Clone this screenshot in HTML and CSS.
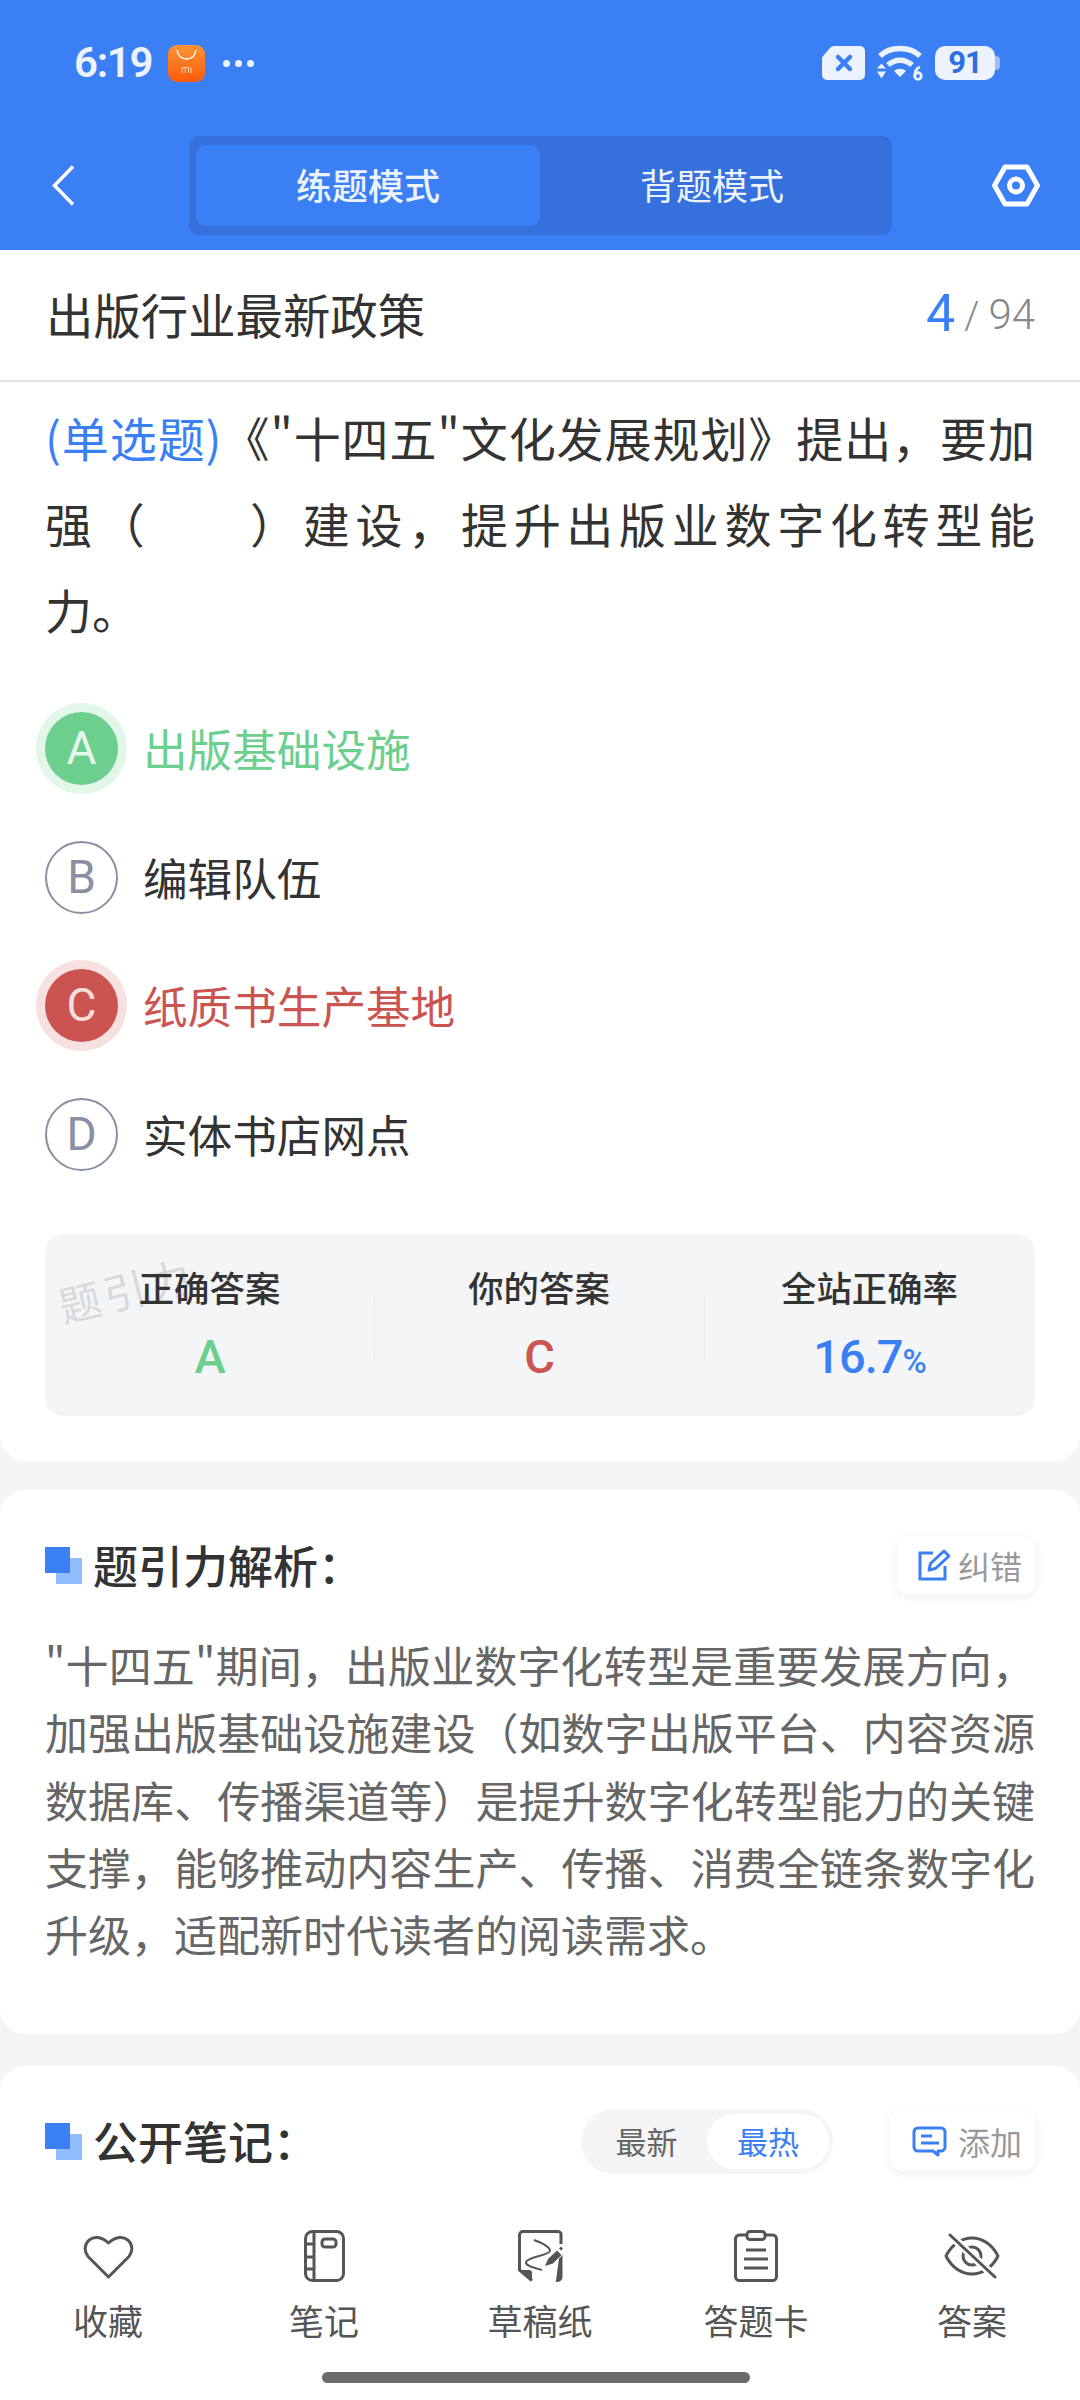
FILE: index.html
```html
<!DOCTYPE html>
<html lang="zh-CN">
<head>
<meta charset="utf-8">
<title>练题模式</title>
<link rel="stylesheet" href="styles.css">
</head>
<body>
<div class="phone">
  <header class="top">
    <div class="status">
      <div class="status-left">
        <span class="time">6:19</span>
        <svg class="mi" viewBox="0 0 37 37" width="37" height="37"><defs><linearGradient id="mig" x1="0" y1="0" x2="0" y2="1"><stop offset="0" stop-color="#fb9434"/><stop offset="1" stop-color="#fc5a0c"/></linearGradient></defs><rect width="37" height="37" rx="9" fill="url(#mig)"/><path d="M9 5c1 6 5 9 9.500 9S27 11 28 5" fill="none" stroke="#fff" stroke-width="1.500"/><path d="M14 28v-5.500h6.500V28M17.200 22.500V28M23 22.500V28" fill="none" stroke="#ffd9b8" stroke-width="1"/></svg>
        <span class="dots"><i></i><i></i><i></i></span>
      </div>
      <div class="status-right">
        <svg width="43" height="34" viewBox="0 0 43 34"><path d="M11 0h27a5 5 0 0 1 5 5v24a5 5 0 0 1-5 5H5a5 5 0 0 1-5-5V13a5 5 0 0 1 1.500-3.500L7.500 2.500A6 6 0 0 1 11 0z" fill="#edf3fe"/><path d="M16 11l12 12M28 11L16 23" stroke="#3b7ff5" stroke-width="4.500" stroke-linecap="round"/></svg>
        <svg class="wifi" width="46" height="36" viewBox="0 0 46 36"><path d="M3 11C13 1 33 1 43 11" fill="none" stroke="#edf3fe" stroke-width="5.500"/><path d="M11 20c7-6.500 17-6.500 24 0" fill="none" stroke="#edf3fe" stroke-width="5.500"/><path d="M17 26c3.500-3 8.500-3 12 0l-6 6z" fill="#edf3fe"/><path d="M0 23.500l4.500-5 4.500 5zM0 26.500l4.500 7 4.500-7z" fill="#edf3fe"/><circle cx="41" cy="31" r="3.300" fill="none" stroke="#edf3fe" stroke-width="2.800"/><path d="M37.800 31c0-5 2.500-8 5-9" fill="none" stroke="#edf3fe" stroke-width="2.800"/></svg>
        <span class="battery"><b>91</b></span>
      </div>
    </div>
    <nav class="nav">
      <svg class="back" width="22" height="41" viewBox="0 0 22 41"><path d="M21 1.500L2.500 20.500 21 39.500" fill="none" stroke="#fff" stroke-width="3.500"/></svg>
      <div class="tabs">
        <span class="tab active">练题模式</span>
        <span class="tab">背题模式</span>
      </div>
      <svg class="gear" width="48" height="43" viewBox="0 0 48 43"><path d="M13 3h22l10.500 18.500L35 40H13L2.500 21.500z" fill="none" stroke="#fff" stroke-width="5" stroke-linejoin="round"/><circle cx="24" cy="21.500" r="6.500" fill="none" stroke="#fff" stroke-width="5"/></svg>
    </nav>
  </header>

  <section class="card first">
    <div class="subject">
      <span class="subject-name">出版行业最新政策</span>
      <span class="count"><em>4</em><s>/</s>94</span>
    </div>
    <div class="question-body">
      <p class="question">
        <span class="qline"><span class="qtype">(单选题)</span>《"十四五"文化发展规划》提出，要加</span>
        <span class="qline">强（&emsp;&emsp;）建设，提升出版业数字化转型能</span>
        <span class="qline last">力。</span>
      </p>
      <ul class="options">
        <li class="option right"><span class="letter">A</span><span>出版基础设施</span></li>
        <li class="option"><span class="letter">B</span><span>编辑队伍</span></li>
        <li class="option wrong"><span class="letter">C</span><span>纸质书生产基地</span></li>
        <li class="option"><span class="letter">D</span><span>实体书店网点</span></li>
      </ul>
      <div class="stats">
        <span class="watermark">题引力</span>
        <div class="stat"><span class="stat-label">正确答案</span><span class="stat-value green">A</span></div>
        <div class="stat"><span class="stat-label">你的答案</span><span class="stat-value red">C</span></div>
        <div class="stat"><span class="stat-label">全站正确率</span><span class="stat-value blue">16.7<small>%</small></span></div>
      </div>
    </div>
  </section>

  <section class="card analysis">
    <div class="card-head">
      <h2 class="heading"><span class="mark"></span>题引力解析：</h2>
      <button class="chip fix"><svg width="32" height="32" viewBox="0 0 32 32"><path d="M15 4H2v26h25V17" fill="none" stroke="#3b7ff5" stroke-width="3"/><path d="M11 21l1.500-6.500L26 2l5 5-13.500 12.500z" fill="none" stroke="#3b7ff5" stroke-width="3" stroke-linejoin="round"/></svg><span>纠错</span></button>
    </div>
    <p class="analysis-text">"十四五"期间，出版业数字化转型是重要发展方向，加强出版基础设施建设（如数字出版平台、内容资源数据库、传播渠道等）是提升数字化转型能力的关键支撑，能够推动内容生产、传播、消费全链条数字化升级，适配新时代读者的阅读需求。</p>
  </section>

  <section class="card notes">
    <div class="card-head">
      <h2 class="heading"><span class="mark"></span>公开笔记：</h2>
      <div class="notes-tools">
        <div class="sort"><span>最新</span><span class="on">最热</span></div>
        <button class="chip add"><svg width="35" height="31" viewBox="0 0 35 31"><path d="M6 2h23a4 4 0 0 1 4 4v15a4 4 0 0 1-4 4h-3v4l-5-4H6a4 4 0 0 1-4-4V6a4 4 0 0 1 4-4z" fill="none" stroke="#3b7ff5" stroke-width="3" stroke-linejoin="round"/><path d="M9 10h11M9 17h18" stroke="#3b7ff5" stroke-width="3"/></svg><span>添加</span></button>
      </div>
    </div>
  </section>

  <footer class="bottom">
    <div class="tools">
      <div class="tool"><span class="ico"><svg width="51" height="45" viewBox="0 0 51 45"><path d="M25.500 43L5 22.500C-4 11 10-5 25.500 9 41-5 55 11 46 22.500z" fill="none" stroke="#555" stroke-width="3" stroke-linejoin="round"/></svg></span><span class="tool-label">收藏</span></div>
      <div class="tool"><span class="ico"><svg width="41" height="52" viewBox="0 0 41 52"><rect x="1.500" y="1.500" width="38" height="49" rx="7" fill="none" stroke="#555" stroke-width="3"/><path d="M10 1.500v49M1.500 14h8.500M1.500 27h8.500M1.500 39h8.500" stroke="#555" stroke-width="3"/><rect x="18" y="9" width="14" height="8" rx="3" fill="none" stroke="#555" stroke-width="3"/></svg></span><span class="tool-label">笔记</span></div>
      <div class="tool"><span class="ico"><svg width="45" height="52" viewBox="0 0 45 52"><path d="M14 50.500L1.500 40V5a3.500 3.500 0 0 1 3.500-3.500h35A3 3 0 0 1 43 5v9M43 25v22a3.500 3.500 0 0 1-3.500 3.500z" fill="none" stroke="#555" stroke-width="3"/><path d="M1.500 40H11a3 3 0 0 1 3 3v7.500z" fill="#555"/><path d="M16 10C24 13 32 17 32 21 32 25 9 27 8 32 7 36 17 38 24 40" fill="none" stroke="#555" stroke-width="2"/><path d="M27 36l3-7 9-8.500 4.500 4.500-8.500 8.500zM41 18.500l2-2 2 2-2 2z" fill="#555" stroke="#fff" stroke-width="1.500" paint-order="stroke"/></svg></span><span class="tool-label">草稿纸</span></div>
      <div class="tool"><span class="ico"><svg width="44" height="52" viewBox="0 0 44 52"><path d="M12 5H5.500a4 4 0 0 0-4 4v37.500a4 4 0 0 0 4 4h33a4 4 0 0 0 4-4V9a4 4 0 0 0-4-4H32" fill="none" stroke="#555" stroke-width="3"/><rect x="13" y="1.500" width="18" height="8" rx="3" fill="none" stroke="#555" stroke-width="3"/><path d="M12 20h20M10 29h24M10 38h24" stroke="#555" stroke-width="3"/></svg></span><span class="tool-label">答题卡</span></div>
      <div class="tool"><span class="ico"><svg width="56" height="46" viewBox="0 0 56 46"><path d="M2 23C14 -1 42 -1 54 23 42 47 14 47 2 23z" fill="none" stroke="#555" stroke-width="3" stroke-linejoin="round"/><circle cx="28" cy="23" r="9" fill="none" stroke="#555" stroke-width="3"/><path d="M6 2l45 42" stroke="#fff" stroke-width="8"/><path d="M6 2l45 42" stroke="#555" stroke-width="3" stroke-linecap="round"/></svg></span><span class="tool-label">答案</span></div>
    </div>
    <div class="home-bar"></div>
  </footer>
</div>
</body>
</html>
```
FILE: styles.css
```css
* { box-sizing: border-box; margin: 0; padding: 0; }
html, body { width: 1080px; height: 2400px; overflow: hidden; }
body { background: #f4f5f7; font-family: "Noto Sans CJK SC", "Noto Sans", Roboto, sans-serif; color: #333; }
.phone { width: 1080px; height: 2400px; display: flex; flex-direction: column; position: relative; overflow: hidden; }

.top { height: 250px; background: #3b7ff5; flex: none; }
.status { height: 136px; padding: 41px 85px 0 74px; display: flex; justify-content: space-between; align-items: flex-start; }
.status-left { display: flex; align-items: center; height: 44px; }
.time { font: 600 42px/44px Roboto, sans-serif; color: #edf3fe; width: 94px; letter-spacing: -1.300px; }
.mi { flex: none; }
.dots { display: flex; gap: 5px; margin-left: 18px; }
.dots i { width: 7px; height: 7px; border-radius: 50%; background: #edf3fe; }
.status-right { display: flex; align-items: center; gap: 12px; height: 44px; }
.battery { width: 60px; height: 34px; background: #edf3fe; border-radius: 10px; display: flex; align-items: center; justify-content: center; position: relative; }
.battery::after { content: ""; position: absolute; right: -5px; top: 10px; width: 5px; height: 14px; background: #9dbcf8; border-radius: 0 4px 4px 0; }
.battery b { font: 700 31px/34px Roboto, sans-serif; color: #2f6fe0; letter-spacing: -1px; }
.nav { display: flex; align-items: center; height: 99px; }
.back { margin-left: 52px; flex: none; }
.tabs { margin-left: 115px; width: 703px; height: 99px; background: #3570dd; border-radius: 10px; padding: 9px 7px; display: flex; flex: none; }
.tab { flex: none; width: 344px; text-align: center; font-size: 36px; line-height: 79px; height: 81px; color: #edf3fe; border-radius: 10px; }
.tab.active { background: #3b7ff5; font-weight: 500; }
.gear { margin-left: 100px; flex: none; }

.card { background: #fff; }
.first { height: 1211px; border-radius: 0 0 26px 26px; flex: none; }
.subject { height: 132px; border-bottom: 2px solid #e2e2e2; padding: 0 45px 2px 46px; display: flex; align-items: center; justify-content: space-between; }
.subject-name { font-size: 47.400px; line-height: 60px; color: #333; }
.count { font: 300 42px/60px Roboto, sans-serif; color: #888; display: flex; align-items: baseline; }
.count em { font-style: normal; font-size: 52px; color: #3b7ff5; font-weight: 400; transform: translateY(2px); }
.count s { text-decoration: none; margin: 0 9px; font-size: 38px; }
.question-body { padding: 12px 45px 0; }
.question { font-size: 47px; line-height: 86px; color: #333; }
.qline { display: block; text-align: justify; text-align-last: justify; }
.qline.last { text-align-last: left; }
.qtype { color: #3b7ff5; }
.options { list-style: none; margin-top: 60px; display: flex; flex-direction: column; gap: 55.700px; }
.option { display: flex; align-items: center; height: 73px; font-size: 44.600px; color: #333; }
.option > span:last-child { padding-bottom: 2px; }
.letter { width: 73px; height: 73px; flex: none; border-radius: 50%; border: 2px solid #8a8fa3; color: #8a8fa3; font: 400 46px/69px Roboto, sans-serif; text-align: center; margin-right: 25px; }
.right { color: #6ccf8e; }
.right .letter { background: #6ccf8e; border: 0; line-height: 73px; color: #e6f8ec; box-shadow: 0 0 0 9px #e2f6e9; }
.wrong { color: #cb5450; }
.wrong .letter { background: #cb5450; border: 0; line-height: 73px; color: #f8dfdf; box-shadow: 0 0 0 9px #f6e0e0; }

.stats { position: relative; margin-top: 63px; height: 182px; background: #f4f5f7; border-radius: 18px; display: grid; grid-template-columns: 329px 330px 331px; overflow: hidden; }
.stat { display: flex; flex-direction: column; align-items: center; padding-top: 30px; position: relative; }
.stat + .stat::before { content: ""; position: absolute; left: 0; top: 63px; height: 62px; width: 1px; background: #e8e9ec; }
.stat-label { font-size: 35.400px; line-height: 46px; font-weight: 500; color: #333; }
.stat-value { font: 500 47px/62px Roboto, sans-serif; margin-top: 16px; letter-spacing: -1px; }
.stat-value small { font-size: 33px; }
.green { color: #6ccf8e; }
.red { color: #cb5450; }
.blue { color: #3b7ff5; }
.watermark { position: absolute; left: 12px; top: 30px; font-size: 42px; line-height: 50px; letter-spacing: 4px; color: #d8d9dc; transform: rotate(-14deg); }

.analysis { margin-top: 29px; height: 544px; border-radius: 26px; padding: 45px 45px 0; flex: none; }
.card-head { display: flex; justify-content: space-between; align-items: center; height: 60px; }
.heading { font-size: 45px; line-height: 60px; font-weight: 500; display: flex; align-items: center; color: #333; }
.mark { width: 37px; height: 37px; margin-right: 11px; position: relative; flex: none; }
.mark::before { content: ""; position: absolute; left: 0; top: 0; width: 25px; height: 26px; background: #3b7ff5; z-index: 1; }
.mark::after { content: ""; position: absolute; right: 0; bottom: 0; width: 26px; height: 26px; background: #8fbcfb; }
.chip { border: 0; border-radius: 12px; background: #fff; box-shadow: 0 2px 10px rgba(0,0,0,.08); display: flex; align-items: center; font-family: inherit; font-size: 32px; color: #999; }
.chip svg { flex: none; }
.chip.fix { height: 59px; width: 138px; padding: 0 0 0 21px; gap: 8px; }
.chip.add { height: 60px; width: 145px; padding: 0 0 0 22px; gap: 11px; }
.analysis-text { margin-top: 36px; font-size: 43px; line-height: 67.300px; color: #666; text-align: justify; }

.notes { margin-top: 32px; flex: 1; border-radius: 26px 26px 0 0; padding: 45px 45px 0; }
.notes-tools { display: flex; align-items: center; gap: 57px; }
.sort { width: 252px; height: 65px; background: #f5f5f5; border-radius: 33px; padding: 5px 4px 5px 5px; display: flex; font-size: 31px; color: #666; }
.sort span { flex: 1; text-align: center; line-height: 53px; }
.sort .on { background: #fff; color: #3b7ff5; border-radius: 28px; flex: none; width: 122px; }

.bottom { position: absolute; left: 0; right: 0; bottom: 0; height: 199px; background: #fff; padding-top: 28px; }
.tools { display: grid; grid-template-columns: repeat(5, 216px); justify-items: center; }
.tool { display: flex; flex-direction: column; align-items: center; color: #555; width: 216px; }
.ico { height: 54px; display: flex; align-items: center; }
.tool-label { margin-top: 14px; font-size: 35px; line-height: 46px; }
.home-bar { position: absolute; left: 322px; top: 171px; width: 428px; height: 11px; border-radius: 6px; background: #6b6b6b; }
```
